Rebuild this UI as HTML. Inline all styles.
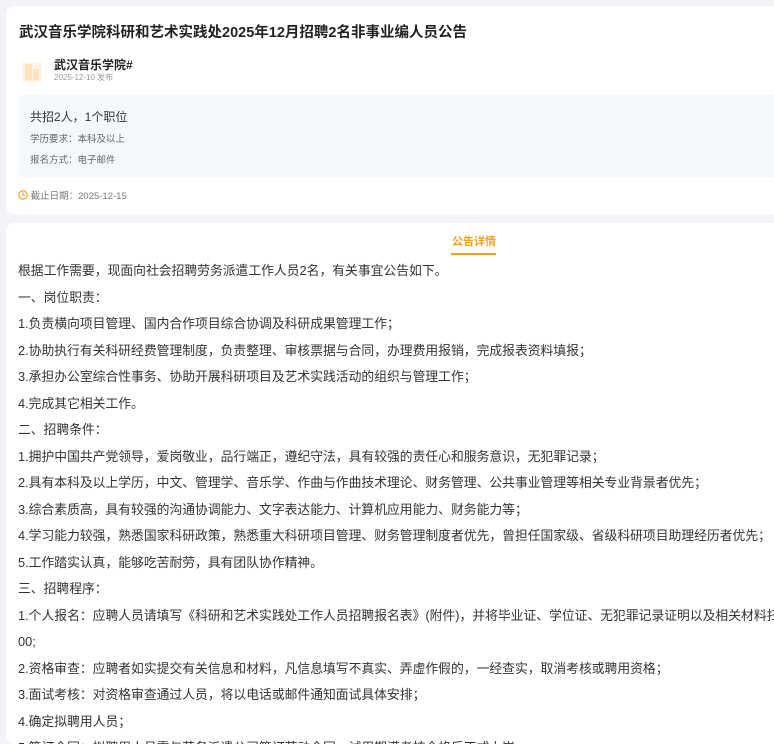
<!DOCTYPE html>
<html><head><meta charset="utf-8"><style>
html,body{margin:0;padding:0;width:774px;height:744px;overflow:hidden;background:#f3f4f9;font-family:"Liberation Sans","Noto Sans CJK SC",sans-serif;color:#333}
.card{position:absolute;left:6px;width:800px;background:#fff;border-radius:8px}
#c1{top:6px;height:208px}
#c2{top:223px;height:521px;overflow:hidden}
h1{position:absolute;left:13px;top:15px;margin:0;font-size:14.5px;font-weight:bold;color:#222;white-space:nowrap}
.logo{position:absolute;left:16px;top:52px;width:20px;height:24px}
.org{position:absolute;left:48px;top:50px;font-size:12px;font-weight:bold;color:#222}
.date{position:absolute;left:48px;top:66px;font-size:8px;color:#999}
.box{position:absolute;left:12px;top:89px;width:780px;height:82px;background:#f4f7fc;border-radius:6px}
.box .a{position:absolute;left:12px;top:13px;font-size:12px;color:#333}
.box .b{position:absolute;left:12px;top:36px;font-size:9.5px;color:#666}
.box .c{position:absolute;left:12px;top:57px;font-size:9.5px;color:#666}
.dl{position:absolute;left:12px;top:182px;font-size:9.5px;color:#777}
.tab{position:absolute;left:446px;top:10px;font-size:11px;font-weight:bold;color:#f0a020}
.ul{position:absolute;left:445px;top:30px;width:45px;height:2px;background:#f0a020}
.txt{position:absolute;left:12px;top:35px;font-size:12.8px;line-height:26.5px;white-space:nowrap;color:#333}
</style></head><body>
<div class="card" id="c1">
<h1>武汉音乐学院科研和艺术实践处2025年12月招聘2名非事业编人员公告</h1>
<svg class="logo" viewBox="0 0 20 24"><rect x="0" y="4" width="20" height="20" fill="#fff4e6"/><rect x="3" y="6" width="7" height="16" fill="#fde3c3"/><rect x="11" y="11" width="6" height="11" fill="#fde3c3"/></svg>
<div class="org">武汉音乐学院#</div>
<div class="date">2025-12-10 发布</div>
<div class="box"><div class="a">共招2人，1个职位</div><div class="b">学历要求：本科及以上</div><div class="c">报名方式：电子邮件</div></div>
<div class="dl"><svg width="10" height="10" viewBox="0 0 10 10" style="vertical-align:-1px"><circle cx="5" cy="5" r="4.2" fill="none" stroke="#f0a020" stroke-width="1.2"/><path d="M5 2.5V5.2H7" fill="none" stroke="#f0a020" stroke-width="1.1"/></svg> 截止日期：2025-12-15</div>
</div>
<div class="card" id="c2">
<div class="tab">公告详情</div><div class="ul"></div>
<div class="txt">根据工作需要，现面向社会招聘劳务派遣工作人员2名，有关事宜公告如下。<br>一、岗位职责：<br>1.负责横向项目管理、国内合作项目综合协调及科研成果管理工作；<br>2.协助执行有关科研经费管理制度，负责整理、审核票据与合同，办理费用报销，完成报表资料填报；<br>3.承担办公室综合性事务、协助开展科研项目及艺术实践活动的组织与管理工作；<br>4.完成其它相关工作。<br>二、招聘条件：<br>1.拥护中国共产党领导，爱岗敬业，品行端正，遵纪守法，具有较强的责任心和服务意识，无犯罪记录；<br>2.具有本科及以上学历，中文、管理学、音乐学、作曲与作曲技术理论、财务管理、公共事业管理等相关专业背景者优先；<br>3.综合素质高，具有较强的沟通协调能力、文字表达能力、计算机应用能力、财务能力等；<br>4.学习能力较强，熟悉国家科研政策，熟悉重大科研项目管理、财务管理制度者优先，曾担任国家级、省级科研项目助理经历者优先；<br>5.工作踏实认真，能够吃苦耐劳，具有团队协作精神。<br>三、招聘程序：<br>1.个人报名：应聘人员请填写《科研和艺术实践处工作人员招聘报名表》(附件)，并将毕业证、学位证、无犯罪记录证明以及相关材料扫描<br>00;<br>2.资格审查：应聘者如实提交有关信息和材料，凡信息填写不真实、弄虚作假的，一经查实，取消考核或聘用资格；<br>3.面试考核：对资格审查通过人员，将以电话或邮件通知面试具体安排；<br>4.确定拟聘用人员；<br>5.签订合同：拟聘用人员需与劳务派遣公司签订劳动合同，试用期满考核合格后正式上岗。</div>
</div>
</body></html>
